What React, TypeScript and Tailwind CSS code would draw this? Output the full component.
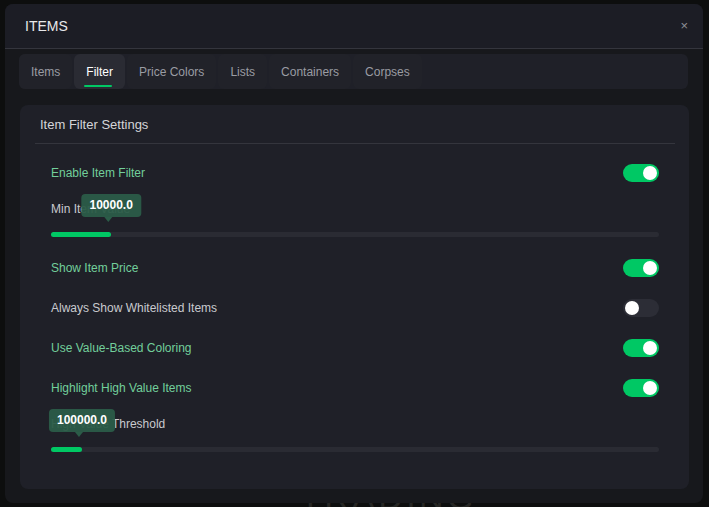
import { useState } from 'react';

const tabs = ['Items', 'Filter', 'Price Colors', 'Lists', 'Containers', 'Corpses'];

function Toggle({ on }: { on: boolean }) {
  return (
    <div
      className={`flex h-[18px] w-9 items-center rounded-full px-[2px] ${
        on ? 'justify-end bg-[#00c864]' : 'justify-start bg-[#2c2d36]'
      }`}
    >
      <div className="h-[14px] w-[14px] rounded-full bg-white" />
    </div>
  );
}

function ToggleRow({ label, on }: { label: string; on: boolean }) {
  return (
    <div className="flex h-10 items-center justify-between">
      <span className={`text-[12px] ${on ? 'text-[#72cf9b]' : 'text-[#c9cacf]'}`}>{label}</span>
      <Toggle on={on} />
    </div>
  );
}

function SliderRow({ label, value, pct }: { label: string; value: string; pct: number }) {
  return (
    <div className="relative pt-[9px] pb-[11px]">
      <div className="text-[12px] leading-[14px] text-[#c9cacf]">{label}</div>
      <div className="relative mt-[16px] h-[5px] w-full rounded-full bg-[#2a2b33]">
        <div className="h-[5px] rounded-full bg-[#00c864]" style={{ width: `${pct}%` }} />
      </div>
      <div
        className="absolute top-[1px] -translate-x-1/2 rounded-[4px] bg-[#2b5c48]/95 px-[8px] py-[5px] text-[12px] leading-[13px] font-bold text-white"
        style={{ left: `${pct}%` }}
      >
        {value}
        <div className="absolute bottom-[-5px] left-[calc(50%-7px)] h-0 w-0 border-x-[4px] border-t-[5px] border-x-transparent border-t-[#2b5c48]" />
      </div>
    </div>
  );
}

export default function App() {
  const [active] = useState('Filter');

  return (
    <div
      className="relative h-[507px] w-[709px] overflow-hidden bg-[#0d0e0e]"
      style={{ fontFamily: '"Liberation Sans", Arial, sans-serif' }}
    >
      <div className="absolute bottom-[-16px] left-[300px] text-[34px] tracking-widest text-[#262624]">TRADING</div>
      <div className="absolute left-[5px] top-[4px] flex h-[499px] w-[698px] flex-col rounded-lg bg-[#17181c]">
        <div className="flex h-[45px] items-center justify-between rounded-t-lg border-b border-[#34353d] bg-[#1c1d25] pl-5 pr-[15px]">
          <span className="text-[14px] text-[#e8e8ea]">ITEMS</span>
          <span className="text-[13px] text-[#8e8f96]">×</span>
        </div>

        <div className="ml-[14px] mr-[15px] mt-[5px] flex h-[35px] gap-[2px] rounded-md bg-[#1f2028]">
          {tabs.map((t) => (
            <div
              key={t}
              className={`relative flex items-center rounded-md px-3 text-[12px] ${
                t === active ? 'bg-[#2a2b33] text-white' : 'bg-[#212229] text-[#9a9ca3]'
              }`}
            >
              {t}
              {t === active && (
                <div className="absolute bottom-[2px] left-[10px] right-[13px] h-[2px] rounded bg-[#00c864]" />
              )}
            </div>
          ))}
        </div>

        <div className="ml-[15px] mr-[14px] mt-[16px] rounded-lg bg-[#1f2028] pl-[15px] pr-[14px] pb-[26px]">
          <div className="border-b border-[#34353d] px-[5px] pt-[10px] pb-[8px] text-[13px] text-[#d4d5d9]">
            Item Filter Settings
          </div>
          <div className="px-[16px] pt-[9px]">
            <ToggleRow label="Enable Item Filter" on />
            <SliderRow label="Min Item Value" value="10000.0" pct={9.9} />
            <ToggleRow label="Show Item Price" on />
            <ToggleRow label="Always Show Whitelisted Items" on={false} />
            <ToggleRow label="Use Value-Based Coloring" on />
            <ToggleRow label="Highlight High Value Items" on />
            <SliderRow label="High Value Threshold" value="100000.0" pct={5.1} />
          </div>
        </div>
      </div>
    </div>
  );
}
